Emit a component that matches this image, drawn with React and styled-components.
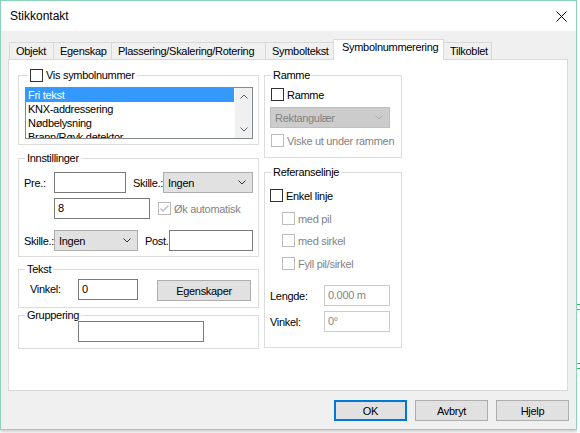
import React from "react";
import styled, { createGlobalStyle } from "styled-components";

const GlobalStyle = createGlobalStyle`
  html, body {
    margin: 0;
    padding: 0;
    background: #fff;
  }
  body {
    font-family: "Liberation Sans", Arial, sans-serif;
    font-size: 11px;
    letter-spacing: -0.3px;
    color: #000;
  }
  * {
    box-sizing: border-box;
  }
`;

const Screen = styled.div`
  display: flex;
  width: 580px;
  height: 433px;
  overflow: hidden;
`;

const Window = styled.div`
  flex-shrink: 0;
  width: 577px;
  height: 430px;
  border: 1px solid #8ad4b8;
  display: flex;
  flex-direction: column;
  box-shadow: 0 2px 3px rgba(0, 0, 0, 0.2);
`;

const Backdrop = styled.div`
  flex: 1;
  background: #fff;
`;

const TitleBar = styled.div`
  height: 30px;
  background: #fff;
  display: flex;
  align-items: center;
  justify-content: space-between;
  padding: 0 9px 0 9px;
  font-size: 12px;
  letter-spacing: 0;
`;

const Body = styled.div`
  flex: 1;
  background: #f0f0f0;
  padding: 8px 8px 0 7px;
  display: flex;
  flex-direction: column;
`;

const TabStrip = styled.div`
  display: flex;
  align-items: flex-end;
  height: 20px;
  padding-left: 1px;
  position: relative;
  z-index: 1;
`;

const Tab = styled.div`
  width: ${(p) => p.$w}px;
  height: ${(p) => (p.$active ? 21 : 17)}px;
  margin-left: -1px;
  margin-bottom: ${(p) => (p.$active ? -1 : 0)}px;
  border: 1px solid #d9d9d9;
  border-bottom: none;
  background: ${(p) => (p.$active ? "#fff" : "#f0f0f0")};
  padding-left: ${(p) => (p.$active ? 8 : 6)}px;
  line-height: ${(p) => (p.$active ? 15 : 16)}px;
  white-space: nowrap;
  position: relative;
  z-index: ${(p) => (p.$active ? 2 : 1)};
  &:first-child {
    margin-left: 0;
  }
`;

const Panel = styled.div`
  height: 332px;
  background: #fff;
  border: 1px solid #d9d9d9;
  padding: 8px 0 0 9px;
  display: flex;
  gap: 5px;
  align-items: flex-start;
`;

const Column = styled.div`
  width: ${(p) => p.$w}px;
  display: flex;
  flex-direction: column;
`;

const Group = styled.fieldset`
  margin: ${(p) => p.$mt || 0}px 0 0 0;
  padding: 0;
  border: 1px solid #dcdcdc;
  height: ${(p) => p.$h}px;
  min-inline-size: 0;
`;

const Legend = styled.legend`
  margin-left: ${(p) => (p.$ml != null ? p.$ml : 6)}px;
  padding: 0 2px;
  height: 14px;
  line-height: 14px;
  display: flex;
  align-items: center;
  gap: 3px;
  white-space: nowrap;
`;

const Content = styled.div`
  padding: ${(p) => p.$pad};
  display: flex;
  flex-direction: column;
`;

const Row = styled.div`
  display: flex;
  align-items: ${(p) => p.$align || "center"};
  margin-top: ${(p) => p.$mt || 0}px;
  margin-left: ${(p) => p.$ml || 0}px;
  height: ${(p) => p.$h || 21}px;
`;

const Label = styled.span`
  width: ${(p) => p.$w}px;
  margin-left: ${(p) => p.$ml || 0}px;
  flex-shrink: 0;
  white-space: nowrap;
  line-height: ${(p) => p.$lh || "normal"};
  color: ${(p) => (p.$disabled ? "#838383" : "#000")};
`;

const TextBox = styled.div`
  width: ${(p) => p.$w}px;
  height: 21px;
  flex-shrink: 0;
  border: 1px solid ${(p) => (p.$disabled ? "#cccccc" : "#7a7a7a")};
  background: #fff;
  color: ${(p) => (p.$disabled ? "#838383" : "#000")};
  padding-left: 3px;
  line-height: 19px;
  margin-left: ${(p) => p.$ml || 0}px;
  margin-top: ${(p) => p.$mt || 0}px;
`;

const ComboBox = styled.div`
  width: ${(p) => p.$w}px;
  height: 21px;
  flex-shrink: 0;
  display: flex;
  align-items: center;
  justify-content: space-between;
  padding: 0 6px 0 4px;
  background: ${(p) => (p.$disabled ? "#cccccc" : "#e1e1e1")};
  border: 1px solid ${(p) => (p.$disabled ? "#bfbfbf" : "#adadad")};
  color: ${(p) => (p.$disabled ? "#838383" : "#000")};
  margin-left: ${(p) => p.$ml || 0}px;
`;

const Box = styled.span`
  width: 13px;
  height: 13px;
  flex-shrink: 0;
  border: 1px solid ${(p) => (p.$disabled ? "#bcbcbc" : "#333")};
  background: #fff;
  display: flex;
  align-items: center;
  justify-content: center;
`;

const CheckRow = styled.div`
  display: flex;
  align-items: center;
  gap: 3px;
  height: 13px;
  margin-top: ${(p) => p.$mt || 0}px;
  margin-left: ${(p) => p.$ml || 0}px;
  white-space: nowrap;
  color: ${(p) => (p.$disabled ? "#838383" : "#000")};
`;

const ListBox = styled.div`
  width: 228px;
  height: 52px;
  margin-top: 5px;
  border: 1px solid #828790;
  display: flex;
  overflow: hidden;
`;

const Items = styled.div`
  flex: 1;
  display: flex;
  flex-direction: column;
`;

const Item = styled.div`
  flex-shrink: 0;
  height: 14px;
  line-height: 14px;
  padding-left: 2px;
  margin-right: 1px;
  white-space: nowrap;
  background: ${(p) => (p.$selected ? "#3399ff" : "transparent")};
  color: ${(p) => (p.$selected ? "#fff" : "#000")};
`;

const ScrollBar = styled.div`
  width: 17px;
  background: #f0f0f0;
  display: flex;
  flex-direction: column;
  justify-content: space-between;
  align-items: center;
  padding: 6px 0 6px;
`;

const Button = styled.div`
  width: ${(p) => p.$w || 73}px;
  height: 21px;
  flex-shrink: 0;
  background: #e1e1e1;
  border: ${(p) => (p.$default ? "2px solid #0078d7" : "1px solid #adadad")};
  display: flex;
  align-items: center;
  justify-content: center;
  margin-left: ${(p) => p.$ml || 0}px;
  margin-top: ${(p) => p.$mt || 0}px;
`;

const ButtonRow = styled.div`
  display: flex;
  justify-content: flex-end;
  gap: 8px;
  margin-top: 9px;
  margin-right: -1px;
`;

const Chevron = ({ up, color = "#606060" }) => (
  <svg width="8" height="5" viewBox="0 0 8 5">
    <polyline
      points={up ? "0.5,4.5 4,1 7.5,4.5" : "0.5,0.5 4,4 7.5,0.5"}
      fill="none"
      stroke={color}
      strokeWidth="1"
    />
  </svg>
);

const CheckBox = ({ checked, disabled }) => (
  <Box $disabled={disabled}>
    {checked && (
      <svg width="11" height="11" viewBox="0 0 11 11">
        <polyline
          points="1.5,5.5 4,8 9.5,2.5"
          fill="none"
          stroke={disabled ? "#bcbcbc" : "#000"}
          strokeWidth="1.4"
        />
      </svg>
    )}
  </Box>
);

const Check = ({ label, checked, disabled, mt, ml }) => (
  <CheckRow $disabled={disabled} $mt={mt} $ml={ml}>
    <CheckBox checked={checked} disabled={disabled} />
    <span>{label}</span>
  </CheckRow>
);

const Combo = ({ value, w, disabled, ml }) => (
  <ComboBox $w={w} $disabled={disabled} $ml={ml}>
    <span>{value}</span>
    <Chevron color={disabled ? "#a8a8a8" : "#333"} />
  </ComboBox>
);

const tabs = [
  { label: "Objekt", w: 45 },
  { label: "Egenskap", w: 59 },
  { label: "Plassering/Skalering/Rotering", w: 155 },
  { label: "Symboltekst", w: 69 },
  { label: "Symbolnummerering", w: 111, active: true },
  { label: "Tilkoblet", w: 49 },
];

const listItems = ["Fri tekst", "KNX-addressering", "Nødbelysning", "Brann/Røyk detektor"];

export default function App() {
  return (
    <>
      <GlobalStyle />
      <Screen>
        <Window>
          <TitleBar>
            <span>Stikkontakt</span>
            <svg width="11" height="11" viewBox="0 0 11 11">
              <path d="M0.5 0.5 L10.5 10.5 M10.5 0.5 L0.5 10.5" stroke="#000" strokeWidth="1" />
            </svg>
          </TitleBar>
          <Body>
            <TabStrip>
              {tabs.map((t) => (
                <Tab key={t.label} $w={t.w} $active={t.active}>
                  {t.label}
                </Tab>
              ))}
            </TabStrip>
            <Panel>
              <Column $w={241}>
                <Group $h={77}>
                  <Legend $ml={9}>
                    <CheckBox />
                    <span>Vis symbolnummer</span>
                  </Legend>
                  <Content $pad="0 0 0 6px">
                    <ListBox>
                      <Items>
                        {listItems.map((it, i) => (
                          <Item key={it} $selected={i === 0}>
                            {it}
                          </Item>
                        ))}
                      </Items>
                      <ScrollBar>
                        <Chevron up />
                        <Chevron />
                      </ScrollBar>
                    </ListBox>
                  </Content>
                </Group>

                <Group $h={106} $mt={6}>
                  <Legend>Innstillinger</Legend>
                  <Content $pad="7px 0 0 5px">
                    <Row>
                      <Label $w={30}>Pre.:</Label>
                      <TextBox $w={72} />
                      <Label $w={30} $ml={7}>
                        Skille.:
                      </Label>
                      <Combo value="Ingen" w={90} />
                    </Row>
                    <Row $mt={5}>
                      <TextBox $w={96} $ml={30}>
                        8
                      </TextBox>
                      <Check label="Øk automatisk" checked disabled ml={8} />
                    </Row>
                    <Row $mt={11}>
                      <Label $w={30}>Skille.:</Label>
                      <Combo value="Ingen" w={84} />
                      <Label $w={24} $ml={7}>
                        Post.
                      </Label>
                      <TextBox $w={84} />
                    </Row>
                  </Content>
                </Group>

                <Group $h={46} $mt={5}>
                  <Legend>Tekst</Legend>
                  <Content $pad="3px 0 0 11px">
                    <Row $align="flex-start" $h={22}>
                      <Label $w={48} $lh="21px">
                        Vinkel:
                      </Label>
                      <TextBox $w={60}>0</TextBox>
                      <Button $w={94} $ml={19} $mt={1}>
                        Egenskaper
                      </Button>
                    </Row>
                  </Content>
                </Group>

                <Group $h={41}>
                  <Legend>Gruppering</Legend>
                  <Content $pad="0 0 0 59px">
                    <TextBox $w={126} $mt={-1} />
                  </Content>
                </Group>
              </Column>

              <Column $w={138}>
                <Group $h={90}>
                  <Legend>Ramme</Legend>
                  <Content $pad="6px 0 0 5px">
                    <Check label="Ramme" ml={1} />
                    <Row $mt={6}>
                      <Combo value="Rektangulær" w={120} disabled />
                    </Row>
                    <Check label="Viske ut under rammen" disabled mt={6} ml={1} />
                  </Content>
                </Group>

                <Group $h={183} $mt={7}>
                  <Legend>Referanselinje</Legend>
                  <Content $pad="10px 0 0 5px">
                    <Check label="Enkel linje" />
                    <Check label="med pil" disabled mt={10} ml={12} />
                    <Check label="med sirkel" disabled mt={9} ml={12} />
                    <Check label="Fyll pil/sirkel" disabled mt={10} ml={12} />
                    <Row $mt={15}>
                      <Label $w={54}>Lengde:</Label>
                      <TextBox $w={66} $disabled>
                        0.000 m
                      </TextBox>
                    </Row>
                    <Row $mt={5}>
                      <Label $w={54}>Vinkel:</Label>
                      <TextBox $w={66} $disabled>
                        0°
                      </TextBox>
                    </Row>
                  </Content>
                </Group>
              </Column>
            </Panel>
            <ButtonRow>
              <Button $default>OK</Button>
              <Button>Avbryt</Button>
              <Button>Hjelp</Button>
            </ButtonRow>
          </Body>
        </Window>
        <Backdrop>
          <svg width="3" height="433" viewBox="0 0 3 433">
            <path d="M0 304.5 H3 M0 309.5 H3 M0 363.5 H3 M0 368.5 H3" stroke="#22c55e" strokeWidth="1" />
          </svg>
        </Backdrop>
      </Screen>
    </>
  );
}
